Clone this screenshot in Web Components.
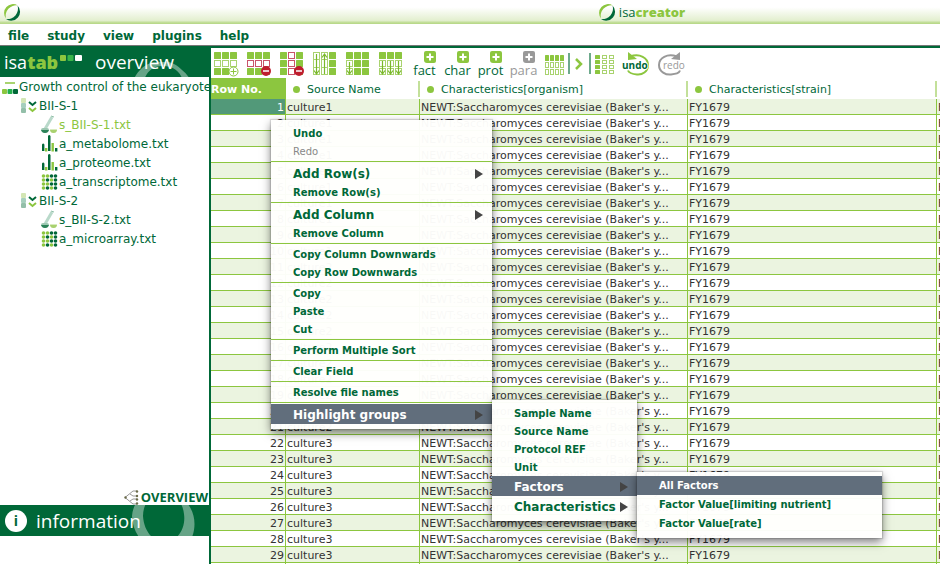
<!DOCTYPE html>
<html lang="en">
<head>
<meta charset="utf-8">
<title>ISAcreator</title>
<style>
  html, body { margin: 0; height: 100%; }
  body {
    --dark: #006838; --lime: #8cc63f; --pale: #ebf4e0; --slate: #616e7c; --grey: #999;
    font: 12px/16px "DejaVu Sans", Verdana, sans-serif; color: var(--dark); background: #fff; overflow: hidden;
  }
</style>
</head>
<body>
<isa-app></isa-app>
<script>
const base = `<style>
  *, *::before { box-sizing: border-box; }
  button { font: inherit; color: inherit; background: none; border: 0; padding: 0; margin: 0; text-align: left; cursor: pointer; }
  a { color: inherit; text-decoration: none; }
  svg { display: block; flex: none; }
</style>`;
const define = (name, html) => customElements.define(name, class extends HTMLElement {
  connectedCallback() {
    if (this.shadowRoot) return;
    const t = document.createElement('template');
    t.innerHTML = base + (typeof html === 'function' ? html(this) : html);
    this.attachShadow({ mode: 'open' }).append(t.content.cloneNode(true));
  }
});

const ring = size => `<svg width="${size}" height="${size}" viewBox="0 0 20 20" aria-hidden="true">
  <path fill="#8cc63f" d="M4 16.500A8.900 8.900 0 0 1 15.800 3.500A10.500 10.500 0 0 0 4 16.500Z"/>
  <path fill="#006838" d="M15.500 3.500A8.900 8.900 0 0 1 4 17A10.500 10.500 0 0 0 15.500 3.500Z"/></svg>`;

define('title-bar', `<style>
  :host { display: grid; grid-template-columns: 1fr auto 1fr; align-items: center; height: 24px; padding: 0 2px;
    background: linear-gradient(#fff 30%, #e3efcf 85%, #b9d98a 96%); }
  .brand { display: flex; align-items: center; gap: 2px; padding-left: 342px; font: 13px/20px "Open Sans", sans-serif; }
  .brand b { color: var(--lime); font-weight: 800; }
</style>${ring(20)}<span class="brand">${ring(20)}<span>isa<b>creator</b></span></span>`);

define('menu-bar', `<style>
  :host { display: block; border-bottom: 1px solid #777; }
  nav { display: flex; gap: 18px; padding: 4px 8px 1px; font-weight: bold; }
</style><nav>${['file', 'study', 'view', 'plugins', 'help'].map(t => `<button>${t}</button>`).join('')}</nav>`);

define('panel-header', `<style>
  :host { position: relative; display: flex; align-items: center; height: 31px; overflow: hidden; background: var(--dark); color: #fff;
    font: 19px/28px "Open Sans", sans-serif; padding-left: 4px; }
  h2 { font: inherit; margin: 0; position: relative; display: flex; align-items: center; }
  .swoosh { position: absolute; left: 130px; bottom: -47px; }
  :host([low]) .swoosh { bottom: -16px; }
</style>
<svg class="swoosh" width="66" height="62" viewBox="0 0 66 62" aria-hidden="true"><path fill="#fff" fill-opacity=".4" fill-rule="evenodd" d="M2 26A29 29 0 0 1 52 8C62 16 66 28 64 40 62 54 50 62 38 62 22 62 3 50 2 26ZM13 26C14 42 24 53 36 52 48 51 56 38 54 24 52 8 42 4 32 4 20 4 13 14 13 26Z"/></svg>
<h2><slot></slot></h2>`);

const icons = {
  root: `<svg width="17" height="16" viewBox="0 0 17 16"><path stroke="#8cc63f" stroke-width="1.500" d="M4 4h10"/><rect x="1" y="10" width="5" height="5" rx="1" fill="#8cc63f"/><rect x="6.500" y="10" width="5" height="5" rx="1" fill="#22b04c"/><rect x="12" y="10" width="5" height="5" rx="1" fill="#006838"/></svg>`,
  study: `<svg width="17" height="16" viewBox="0 0 17 16"><rect x="0" y="0" width="5" height="5" rx="1" fill="#d3e6b4"/><rect x="0" y="5" width="5" height="5" rx="1" fill="#a6cfbd"/><rect x="0" y="10" width="5" height="5" rx="1" fill="#93bfa9"/><path fill="none" stroke="#006838" stroke-width="2" d="M8 4l3.500 3L15 4"/><path fill="none" stroke="#8cc63f" stroke-width="2" d="M8 10l3.500 3L15 10"/></svg>`,
  sample: `<svg width="17" height="19" viewBox="1 0 17 19"><path d="M12 2L5 14" stroke="#b9d9ca" stroke-width="3"/><path d="M11 1l3 1" stroke="#8fbfa8"/><path d="M1 15q0-2 2-2h4q2 0 2 2-1 3-4 3t-4-3z" fill="#9cc7b1"/><path d="M1 15h8q-1 3-4 3t-4-3z" fill="#2b8258"/><path d="M10 14h7q0 4-3.500 4T10 14z" fill="#d9ebc0"/><path d="M10 15h7q-.5 3-3.500 3T10 15z" fill="#a9d16f"/></svg>`,
  bars: `<svg width="17" height="18" viewBox="0 0 17 18"><path fill="#006838" d="M1 9.500q1.200-2 2.400 0V16H1zM7 1q1.200-2 2.500 0v15H7zM14 13h2.400v3.500H14z"/><path fill="#8cc63f" d="M4 13h2.400v3.500H4zM10.500 8h2.400v8.500h-2.400z"/></svg>`,
  dots: `<svg width="17" height="16" viewBox="0 0 17 16">${[0, 1, 2, 3].map(r => [0, 1, 2, 3].map(c => `<circle cx="${2.5 + c * 4}" cy="${2 + r * 4}" r="1.800" fill="${'LLDDLDLDLLDDLDLD'[(r * 4 + c)] === 'L' ? '#8cc63f' : '#006838'}"/>`).join('')).join('')}</svg>`
};
define('tree-item', el => `<style>
  :host { display: flex; align-items: center; gap: 1px; height: 19px; white-space: nowrap; padding-left: calc(var(--level, 0) * 20px + 1px); }
  :host([level="1"]) { --level: 1; } :host([level="2"]) { --level: 2; }
  :host([active]) { color: var(--lime); }
</style>${icons[el.getAttribute('icon')]}<a href="#"><slot></slot></a>`);

define('side-panel', `<style>
  :host { display: flex; flex-direction: column; border-right: 2px solid var(--dark); overflow: hidden; }
  .tree { flex: 1; }
  .logo { font-size: 18px; display: flex; width: 91px; }
  .logo b { color: var(--lime); font-weight: 800; }
  .logo svg { margin: 7px 0 0 2px; }
  .over { display: flex; justify-content: flex-end; align-items: center; gap: 2px; height: 16px; padding-right: 1px; font: bold 13px/16px "Open Sans", sans-serif; }
  .i { width: 22px; height: 22px; border-radius: 11px; background: #fff; color: var(--dark); font: bold 14px/22px "Open Sans", sans-serif; text-align: center; margin: 0 9px 0 1px; }
  .foot { height: 28px; }
</style>
<panel-header><span class="logo">isa<b>tab</b><svg width="22" height="7" viewBox="0 0 22 7"><rect width="6" height="6" rx="1" fill="#8cc63f"/><rect x="7.500" width="6" height="6" rx="1" fill="#39b54a"/><rect x="15" width="7" height="6" rx="1" fill="#fff"/></svg></span>overview</panel-header>
<div class="tree">
  <tree-item icon="root">Growth control of the eukaryote</tree-item>
  <tree-item icon="study" level="1">BII-S-1</tree-item>
  <tree-item icon="sample" level="2" active>s_BII-S-1.txt</tree-item>
  <tree-item icon="bars" level="2">a_metabolome.txt</tree-item>
  <tree-item icon="bars" level="2">a_proteome.txt</tree-item>
  <tree-item icon="dots" level="2">a_transcriptome.txt</tree-item>
  <tree-item icon="study" level="1">BII-S-2</tree-item>
  <tree-item icon="sample" level="2">s_BII-S-2.txt</tree-item>
  <tree-item icon="dots" level="2">a_microarray.txt</tree-item>
</div>
<button class="over"><svg width="15" height="15" viewBox="0 0 15 15"><path fill="none" stroke="#999" d="M13 1H9L1 7.500 9 14h4M6 4l3 2h4M6 11l3-2h4"/><g fill="#6b6b4a"><circle cx="1.500" cy="7.500" r="1.200"/><circle cx="13" cy="1.500" r="1.200"/><circle cx="13" cy="6" r="1.200"/><circle cx="13" cy="9.500" r="1.200"/><circle cx="13" cy="13.500" r="1.200"/></g></svg>OVERVIEW</button>
<panel-header low><span class="i">i</span>information</panel-header>
<div class="foot"></div>`);

/* Toolbar glyphs: cell grids, s = solid, o = outlined, r = red outlined */
const cells = (map, w = 3, cw = 7, ch = 7, px = 8, py = 8) => [...map].map((k, i) => {
  const x = (i % w) * px, y = Math.floor(i / w) * py;
  return k === 's' ? `<rect x="${x}" y="${y}" width="${cw}" height="${ch}" rx=".5" fill="#8cc63f"/>`
    : `<rect x="${x + .5}" y="${y + .5}" width="${cw - 1}" height="${ch - 1}" fill="#fff" stroke="${k === 'r' ? '#c9546a' : '#a9d36f'}"/>`;
}).join('');
const down = (x, y) => `<path fill="none" stroke="#7ab82c" stroke-width="1.200" d="M${x} ${y}V22M${x - 2.5} 18.500l2.500 3.500 2.500-3.500"/>`;
const minus = `<circle cx="19" cy="19" r="5" fill="#be1e2d"/><path stroke="#fff" stroke-width="1.500" d="M16 19h6"/>`;
const plusC = `<circle cx="19.500" cy="19.500" r="4.500" fill="#fff" stroke="#8cc63f"/><path stroke="#8cc63f" d="M19.500 16.500v6M16.500 19.500h6"/>`;
const tall = x => `<rect x="${x + .5}" y=".5" width="6" height="22" fill="#fff" stroke="#a9d36f"/><path stroke="#a9d36f" d="M${x} 7.500h7M${x} 15.500h7"/>`;
const grid = [
  ['Add row', cells('sssooosss') + plusC],
  ['Remove row', cells('sssrrrsss') + minus],
  ['Remove column', cells('srssrssrs') + minus],
  ['Reorder columns', `${cells('oosoosoos')}${tall(0)}${tall(8)}${down(3.5, 2)}<path fill="none" stroke="#7ab82c" stroke-width="1.200" d="M11.500 22V2M9 5.500L11.500 2 14 5.500"/>`],
  ['Copy column down', cells('sssossoss') + down(3.5, 10)],
  ['Copy row down', cells('sssoooooo') + down(3.5, 9) + down(11.5, 9) + down(19.5, 9)]
];
define('tool-bar', `<style>
  :host { display: flex; align-items: flex-start; height: 30px; padding: 4px 0 0 3px; overflow: hidden; }
  button { display: block; flex: none; width: 33px; }
  .add { font: 13px/14px "Open Sans", sans-serif; text-align: center; }
  .add svg { margin: -1px 0 0 16px; }
  .add span { display: block; }
  .adds { display: flex; margin: 0 3px 0 -4px; }
  .off { color: var(--grey); }
  .orient { width: 72px; padding-left: 2px; }
  .hist { width: 30px; margin-left: 6px; }
  text { font: bold 10px "Open Sans", sans-serif; }
</style>
${grid.map(([l, s]) => `<button aria-label="${l}"><svg width="26" height="26" viewBox="0 0 26 26">${s}</svg></button>`).join('')}
<div class="adds">${['fact', 'char', 'prot', 'para'].map((t, i) => `<button class="add ${i === 3 ? 'off' : ''}"><svg width="12" height="12" viewBox="0 0 12 12"><path fill="${i === 3 ? '#999' : '#8cc63f'}" d="M2 0h8q2 0 2 2v8q0 2-2 2H3q-3 0-3-3V2q0-2 2-2z"/><path stroke="#fff" stroke-width="2" d="M6 2.500v7M2.500 6h7"/></svg><span>${t}</span></button>`).join('')}</div>
<button class="orient" aria-label="Switch orientation"><svg width="70" height="24" viewBox="0 0 70 24"><g transform="translate(0 3)">${cells('ssssoooooooo', 4, 4, 6, 5, 7)}</g><path stroke="#3f8f67" stroke-width="1.500" d="M24 1v21M45 1v21"/><path fill="none" stroke="#8cc63f" stroke-width="2.500" d="M31 7l5 5-5 5"/><g transform="translate(50 3)">${cells('soosoosoosoo', 3, 5, 4, 7, 5)}</g></svg></button>
<button class="hist"><svg width="30" height="26" viewBox="0 0 30 26"><path fill="none" stroke="#8cc63f" stroke-width="2" d="M9 4.500C19 1 27 6 27 13s-6 10-11 9.500S8 21 7 18.500"/><path fill="#8cc63f" d="M7 0v8l9-1z"/><text x="1" y="17" fill="#006838" stroke="#fff" stroke-width="2" paint-order="stroke">undo</text></svg></button>
<button class="hist off"><svg width="30" height="26" viewBox="0 0 30 26"><path fill="none" stroke="#999" stroke-width="2" d="M20 4.500C10 1 2 6 2 13s7 10 12 9.500 8-1 9-4"/><path fill="#999" d="M23 0v8l-9-1z"/><text x="6" y="17" fill="#999" stroke="#fff" stroke-width="2" paint-order="stroke" style="font-weight:400">redo</text></svg></button>`);

const rows = Array.from({ length: 30 }, (_, i) => i + 1);
define('data-grid', `<style>
  :host { display: block; color: #333; }
  table { border-collapse: separate; border-spacing: 0; table-layout: fixed; width: 100%; font-size: 11px; line-height: 13px; }
  th { height: 21px; padding: 2px 0 0 21px; text-align: left; font-weight: normal; color: var(--dark); white-space: nowrap; overflow: hidden; position: relative; }
  th:first-child { background: var(--lime); color: #fff; font-weight: bold; padding: 2px 0 0; }
  th:not(:first-child)::before { content: ""; position: absolute; left: 7px; top: 8px; width: 7px; height: 7px; border-radius: 4px; background: var(--lime); }
  th:not(:first-child) { background: linear-gradient(#c3e09a, #c3e09a) right 3px / 2px 16px no-repeat; }
  th:last-child { background: none; }
  td { height: 16px; padding: 2px 0 0 1px; border: solid var(--lime); border-width: 0 1px 1px 0; white-space: nowrap; overflow: hidden; }
  td:first-child { text-align: right; padding: 2px 1px 0 0; }
  td:last-child { border-right: 0; }
  tbody tr:nth-child(odd) td { background: var(--pale); }
  tbody tr:first-child td:first-child { background: #529979; color: #fff; }
</style>
<table><colgroup><col style="width:75px"><col style="width:134px"><col style="width:268px"><col style="width:249px"><col></colgroup>
<thead><tr><th>Row No.</th><th>Source Name</th><th>Characteristics[organism]</th><th>Characteristics[strain]</th><th></th></tr></thead>
<tbody>${rows.map(n => `<tr><td>${n}</td><td>culture${n < 11 ? 1 : n < 22 ? 2 : 3}</td><td>NEWT:Saccharomyces cerevisiae (Baker's y...</td><td>FY1679</td><td>F</td></tr>`).join('')}</tbody></table>`);

define('menu-item', el => `<style>
  :host { display: block; }
  button { display: flex; align-items: center; justify-content: space-between; width: 100%; height: var(--item, 18px); padding: 1px 9px 0 22px; font: bold 10px/16px "DejaVu Sans", Verdana, sans-serif; white-space: nowrap; }
  :host([sub]) button { height: 20px; font-size: 12px; }
  :host([off]) button { color: #888; font-weight: normal; }
  :host([on]) button { background: var(--slate); color: #fff; }
</style><button role="menuitem"><slot></slot>${el.hasAttribute('sub') ? '<svg width="8" height="10" viewBox="0 0 8 10"><path fill="#444" d="M0 0l8 5-8 5z"/></svg>' : ''}</button>`);

define('menu-rule', `<style>:host { display: block; height: 3px; padding: 1px 0; } hr { margin: 0; border: 0; height: 1px; background: var(--lime); }</style><hr>`);

define('popup-menu', `<style>
  :host { position: absolute; display: block; padding: 4px 0 5px; background: rgba(255,255,253,.97); box-shadow: 0 4px 9px rgba(0,0,0,.5), 0 0 1px 1px rgba(0,0,0,.12); }
</style><div role="menu"><slot></slot></div>`);

define('isa-app', `<style>
  :host { display: flex; flex-direction: column; height: 100vh; overflow: hidden; }
  .body { flex: 1; min-height: 0; display: grid; grid-template-columns: 211px 1fr; }
  main { border-top: 2px solid var(--dark); min-width: 0; overflow: hidden; }
  .context { left: 271px; top: 120px; width: 221px; }
  .groups { left: 492px; top: 400px; width: 145px; }
  .factors { left: 637px; top: 472px; width: 245px; --item: 19px; }
</style>
<title-bar></title-bar><menu-bar></menu-bar>
<div class="body"><side-panel></side-panel><main><tool-bar></tool-bar><data-grid></data-grid></main></div>
<popup-menu class="context">
  <menu-item>Undo</menu-item><menu-item off>Redo</menu-item><menu-rule></menu-rule>
  <menu-item sub>Add Row(s)</menu-item><menu-item>Remove Row(s)</menu-item><menu-rule></menu-rule>
  <menu-item sub>Add Column</menu-item><menu-item>Remove Column</menu-item><menu-rule></menu-rule>
  <menu-item>Copy Column Downwards</menu-item><menu-item>Copy Row Downwards</menu-item><menu-rule></menu-rule>
  <menu-item>Copy</menu-item><menu-item>Paste</menu-item><menu-item>Cut</menu-item><menu-rule></menu-rule>
  <menu-item>Perform Multiple Sort</menu-item><menu-rule></menu-rule>
  <menu-item>Clear Field</menu-item><menu-rule></menu-rule>
  <menu-item>Resolve file names</menu-item><menu-rule></menu-rule>
  <menu-item sub on>Highlight groups</menu-item>
</popup-menu>
<popup-menu class="groups">
  <menu-item>Sample Name</menu-item><menu-item>Source Name</menu-item><menu-item>Protocol REF</menu-item><menu-item>Unit</menu-item>
  <menu-item sub on>Factors</menu-item><menu-item sub>Characteristics</menu-item>
</popup-menu>
<popup-menu class="factors">
  <menu-item on>All Factors</menu-item><menu-item>Factor Value[limiting nutrient]</menu-item><menu-item>Factor Value[rate]</menu-item>
</popup-menu>`);
</script>
</body>
</html>
